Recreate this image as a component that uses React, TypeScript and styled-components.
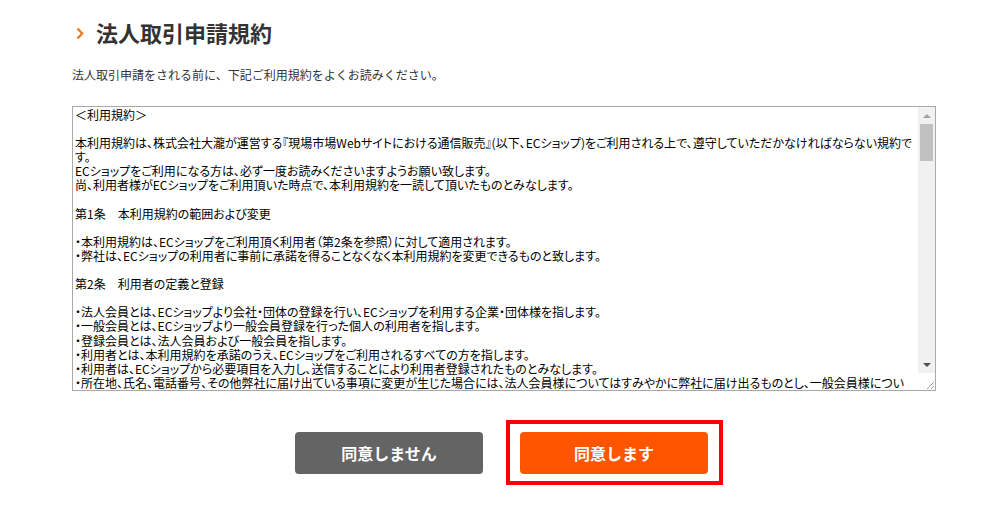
import React from "react";
import styled, { createGlobalStyle } from "styled-components";

const GlobalStyle = createGlobalStyle`
  html, body {
    margin: 0;
    padding: 0;
    background: #ffffff;
  }
  body {
    font-family: "Noto Sans CJK JP", "Noto Sans", sans-serif;
    color: #333333;
  }
`;

const Page = styled.div`
  width: 1003px;
  min-height: 510px;
  padding-top: 18px;
  box-sizing: border-box;
`;

const Main = styled.section`
  width: 864px;
  margin-left: 72px;
`;

const Heading = styled.h1`
  display: flex;
  align-items: center;
  height: 28px;
  margin: 0;
  font-size: 22px;
  line-height: 28px;
  font-weight: 700;
  color: #333333;
`;

const Chevron = styled.svg`
  width: 8px;
  height: 13px;
  margin-left: 4px;
  margin-right: 12px;
  margin-top: 2px;
  flex: none;
`;

const Lead = styled.p`
  margin: 20px 0 0;
  font-size: 12px;
  line-height: 18px;
  color: #333333;
`;

const TermsBox = styled.div`
  display: flex;
  box-sizing: border-box;
  width: 864px;
  height: 285px;
  margin-top: 22px;
  border: 1px solid #a9a9a9;
  background: #ffffff;
`;

const Terms = styled.textarea`
  flex: 1;
  min-width: 0;
  box-sizing: border-box;
  height: 100%;
  margin: 0;
  padding: 1px 2px;
  border: 0;
  font-family: "Noto Sans CJK JP", sans-serif;
  font-feature-settings: "palt";
  font-size: 12px;
  line-height: 14.1px;
  color: #000000;
  background: #ffffff;
  outline: none;
  resize: none;
  overflow-y: scroll;
  scrollbar-width: none;
  &::-webkit-scrollbar {
    display: none;
  }
`;

const ScrollRail = styled.div`
  display: flex;
  flex-direction: column;
  width: 17px;
  flex: none;
  background: #f1f1f1;
`;

const ArrowButton = styled.div`
  display: flex;
  align-items: center;
  justify-content: center;
  height: 17px;
  flex: none;
`;

const Track = styled.div`
  flex: 1;
  display: flex;
  flex-direction: column;
  padding: 0 2px;
`;

const Thumb = styled.div`
  height: 37px;
  background: #c1c1c1;
`;

const Corner = styled.div`
  display: flex;
  align-items: flex-end;
  justify-content: flex-end;
  height: 17px;
  flex: none;
  background: #ffffff;
`;

const ButtonRow = styled.div`
  display: flex;
  align-items: center;
  gap: 23px;
  margin-top: 29px;
  padding-left: 295px;
`;

const Button = styled.button<{ $tone: "gray" | "orange" }>`
  width: 188px;
  height: 42px;
  border: 0;
  border-radius: 4px;
  padding: 0;
  background: ${(p) => (p.$tone === "orange" ? "#ff5500" : "#646464")};
  color: #ffffff;
  font-family: "Noto Sans CJK JP", sans-serif;
  font-size: 16px;
  font-weight: 700;
  cursor: pointer;
`;

const HighlightFrame = styled.div`
  display: flex;
  padding: 8px 11px 7px 10px;
  border: 4px solid #ff0000;
`;

const termsText = `＜利用規約＞

本利用規約は、株式会社大瀧が運営する『現場市場Webサイトにおける通信販売』(以下、ECショップ)をご利用される上で、遵守していただかなければならない規約で
す。
ECショップをご利用になる方は、必ず一度お読みくださいますようお願い致します。
尚、利用者様がECショップをご利用頂いた時点で、本利用規約を一読して頂いたものとみなします。

第1条　本利用規約の範囲および変更

・本利用規約は、ECショップをご利用頂く利用者（第2条を参照）に対して適用されます。
・弊社は、ECショップの利用者に事前に承諾を得ることなくなく本利用規約を変更できるものと致します。

第2条　利用者の定義と登録

・法人会員とは、ECショップより会社・団体の登録を行い、ECショップを利用する企業・団体様を指します。
・一般会員とは、ECショップより一般会員登録を行った個人の利用者を指します。
・登録会員とは、法人会員および一般会員を指します。
・利用者とは、本利用規約を承諾のうえ、ECショップをご利用されるすべての方を指します。
・利用者は、ECショップから必要項目を入力し、送信することにより利用者登録されたものとみなします。
・所在地、氏名、電話番号、その他弊社に届け出ている事項に変更が生じた場合には、法人会員様についてはすみやかに弊社に届け出るものとし、一般会員様につい
ては会員情報変更画面より速やかに変更を行うものとします。

第3条　パスワードの管理

・登録会員は、ご自身のIDおよびパスワードを第三者に開示、貸与、共有しないものとします。
・登録会員は、IDおよびパスワードを自己の責任において厳重に管理するものとします。
・ID・パスワードの管理不十分、使用上の過誤、第三者の使用等による損害の責任は登録会員が負うものとし、弊社は一切責任を負いません。
・登録会員は、パスワードの盗難、第三者による使用が判明した場合には、直ちに弊社にその旨を連絡するものとします。

第4条　登録の取消し

・登録会員が以下の項目に該当する場合、弊社は事前に通知することなく登録を取り消すことができるものとします。
　1.登録内容に虚偽の記載があった場合
　2.過去に本利用規約違反等により登録の取消しを受けている場合
　3.ECショップの運営を妨害した場合
　4.代金の支払いを怠った場合
　5.その他、弊社が登録会員として不適当と判断した場合

第5条　商品の注文

・利用者は、ECショップの所定の手続きに従って商品を注文するものとします。
・注文確認メールの送信をもって、売買契約が成立するものとします。
・在庫切れ等の理由により、ご注文をお受けできない場合があります。その場合は弊社よりご連絡致します。

第6条　商品の価格および支払い

・商品の価格は、ECショップ上に表示された価格とします。
・送料および支払手数料は、別途ECショップ上に表示するものとします。
・お支払い方法は、ECショップ上に表示された方法の中から利用者が選択するものとします。
・法人会員様の掛け払いについては、別途弊社との取り決めに従うものとします。

第7条　商品の配送

・商品の配送は、利用者が指定した配送先に弊社指定の配送業者により行うものとします。
・天候、交通事情、その他やむを得ない事由により、配送が遅れる場合があります。
・配送先の誤記入等、利用者の責任により商品が届かなかった場合、再配送にかかる費用は利用者の負担とします。

第8条　返品・交換

・商品到着後、商品に破損、汚損、品違い等があった場合には、商品到着後7日以内に弊社までご連絡ください。
・お客様のご都合による返品・交換はお受けできません。
・受注生産品、特注品、加工品については、返品・交換をお受けできません。

第9条　禁止事項

・利用者は、ECショップの利用にあたり、以下の行為を行ってはならないものとします。
　1.ECショップの運営を妨げる行為
　2.他の利用者、第三者もしくは弊社に迷惑、不利益もしくは損害を与える行為
　3.他の利用者、第三者もしくは弊社の著作権、その他の権利を侵害する行為
　4.公序良俗に反する行為
　5.虚偽の情報を登録する行為
　6.転売目的で商品を購入する行為
　7.法令に違反する行為、またはそのおそれのある行為
　8.その他、弊社が不適切と判断する行為

第10条　個人情報の取扱い

・弊社は、利用者の個人情報を弊社が別途定めるプライバシーポリシーに従い適切に取り扱うものとします。
・弊社は、法令に基づく場合を除き、利用者の同意なく個人情報を第三者に開示または提供致しません。

第11条　著作権

・ECショップに掲載されている文章、画像、その他の情報の著作権は、弊社または正当な権利者に帰属します。
・利用者は、弊社の事前の承諾なく、これらを複製、転載、改変等することはできません。

第12条　免責事項

・弊社は、ECショップの内容について、その正確性、有用性等を保証するものではありません。
・通信回線やコンピューター等の障害によるシステムの中断・遅滞・中止・データの消失等に関する損害について、弊社は一切責任を負いません。
・ECショップから他のWebサイトへのリンク、または他のWebサイトからECショップへのリンクが提供されている場合でも、
　弊社はECショップ以外のWebサイトおよびそこから得られる情報に関して一切責任を負いません。

第13条　サービスの中断・停止

・弊社は、システムの保守点検、天災地変その他の事由により、利用者に事前に通知することなく
　ECショップの運営を一時的に中断または停止することができるものとします。

第14条　準拠法および管轄裁判所

・本利用規約の解釈および適用は、日本国法に準拠するものとします。
・ECショップの利用に関して紛争が生じた場合には、弊社の本店所在地を管轄する裁判所を第一審の専属的合意管轄裁判所とします。

以上`;

export default function App() {
  return (
    <>
      <GlobalStyle />
      <Page>
        <Main>
          <Heading>
            <Chevron viewBox="0 0 8 13" aria-hidden="true">
              <path d="M1.5 1.5 L6.2 6.5 L1.5 11.5" fill="none" stroke="#f07a1e" strokeWidth="2.3" />
            </Chevron>
            法人取引申請規約
          </Heading>
          <Lead>法人取引申請をされる前に、下記ご利用規約をよくお読みください。</Lead>
          <TermsBox>
            <Terms readOnly defaultValue={termsText} />
            <ScrollRail aria-hidden="true">
              <ArrowButton>
                <svg width="8" height="4" viewBox="0 0 8 4">
                  <path d="M0 4 L4 0 L8 4 Z" fill="#a3a3a3" />
                </svg>
              </ArrowButton>
              <Track>
                <Thumb />
              </Track>
              <ArrowButton>
                <svg width="8" height="4" viewBox="0 0 8 4">
                  <path d="M0 0 L8 0 L4 4 Z" fill="#505050" />
                </svg>
              </ArrowButton>
              <Corner>
                <svg width="12" height="12" viewBox="0 0 12 12">
                  <path d="M11 4 L4 11 M11 8 L8 11" stroke="#9a9a9a" strokeWidth="1" fill="none" />
                </svg>
              </Corner>
            </ScrollRail>
          </TermsBox>
        </Main>
        <ButtonRow>
          <Button $tone="gray">同意しません</Button>
          <HighlightFrame>
            <Button $tone="orange">同意します</Button>
          </HighlightFrame>
        </ButtonRow>
      </Page>
    </>
  );
}
